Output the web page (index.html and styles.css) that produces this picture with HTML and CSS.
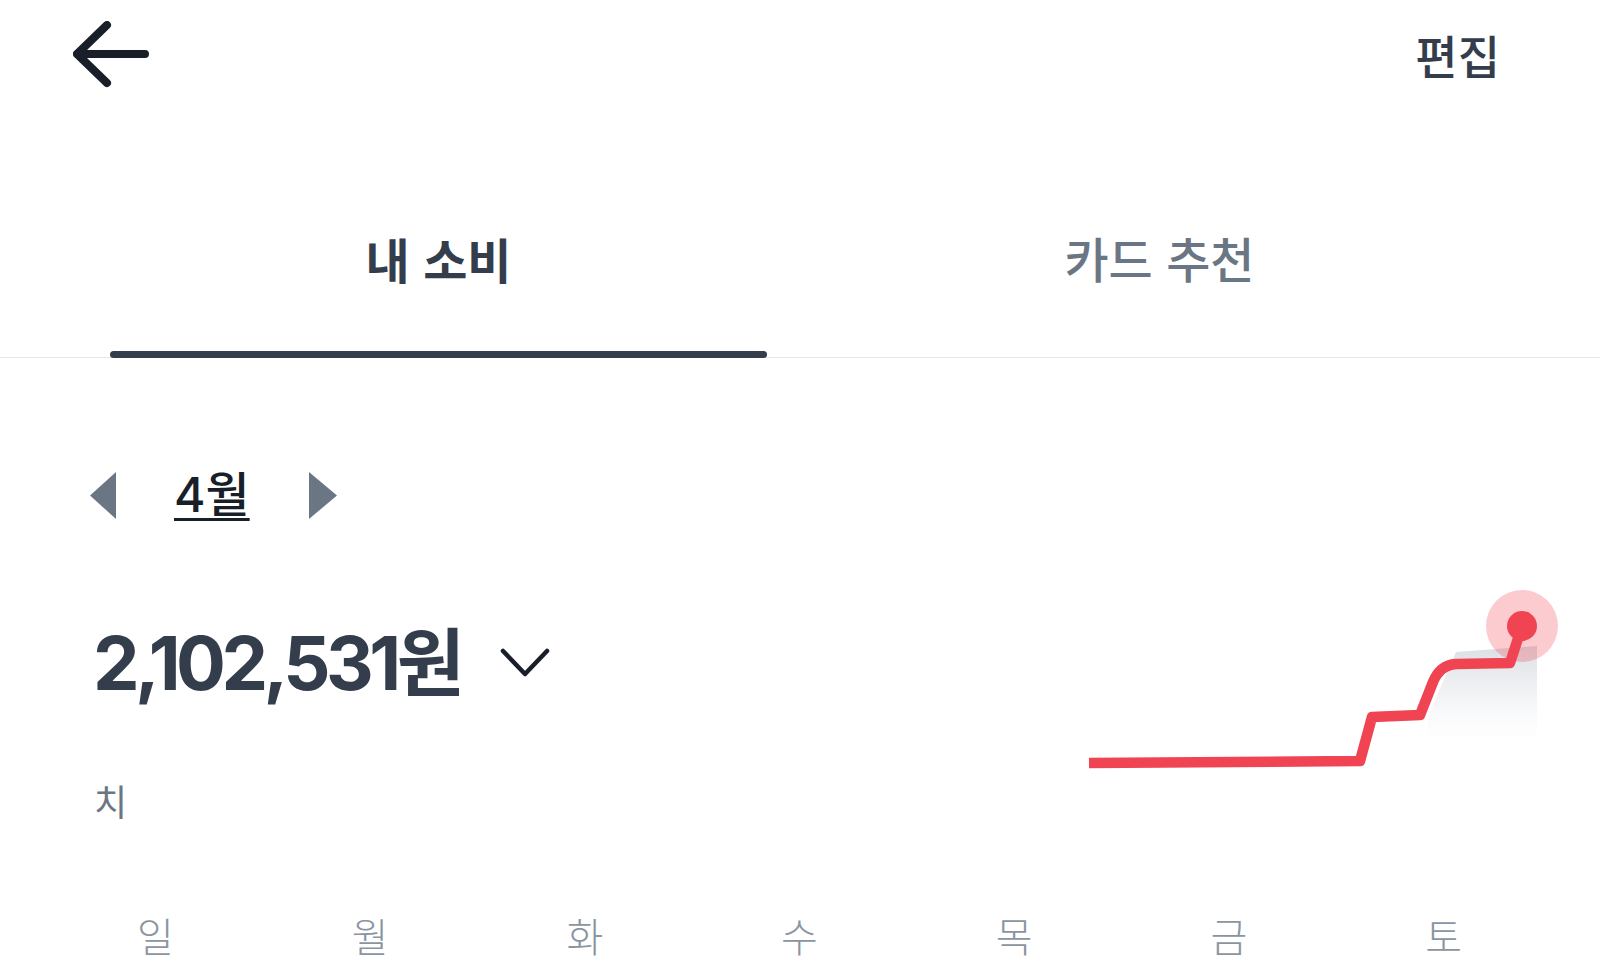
FILE: index.html
```html
<!DOCTYPE html>
<html lang="ko">
<head>
<meta charset="utf-8">
<title>내 소비</title>
<link rel="stylesheet" href="styles.css">
</head>
<body>
<header class="header">
  <svg class="back" width="80" height="70" viewBox="0 0 80 70">
    <path d="M34 4 L4 33 L34 62 M4 33 L72 33" fill="none" stroke="#191f28" stroke-width="8" stroke-linecap="round" stroke-linejoin="round"/>
  </svg>
  <span class="edit">편집</span>
</header>
<nav class="tabs">
  <div class="tab active"><span class="tab-label">내 소비</span><span class="tab-bar"></span></div>
  <div class="tab"><span class="tab-label">카드 추천</span></div>
</nav>
<main class="main">
  <div class="month-row">
    <svg class="tri" width="26" height="47" viewBox="0 0 26 47"><path d="M26 0 L26 47 L0 23.5 Z" fill="#6b7684"/></svg>
    <span class="month">4월</span>
    <svg class="tri" width="28" height="47" viewBox="0 0 28 47"><path d="M0 0 L0 47 L28 23.5 Z" fill="#6b7684"/></svg>
  </div>
  <div class="amount-row">
    <span class="amount">2,102,531원</span>
    <svg class="chev" width="50" height="30" viewBox="0 0 50 30"><path d="M3 3 L25 26 L47 3" fill="none" stroke="#191f28" stroke-width="4.5" stroke-linecap="round" stroke-linejoin="round"/></svg>
  </div>
  <div class="note">치</div>
  <svg class="chart" width="540" height="210" viewBox="0 0 540 210">
    <defs>
      <linearGradient id="shade" x1="0" y1="0" x2="0" y2="1">
        <stop offset="0" stop-color="#d9dde2" stop-opacity="0.95"/>
        <stop offset="0.5" stop-color="#eef0f3" stop-opacity="0.7"/>
        <stop offset="1" stop-color="#ffffff" stop-opacity="0"/>
      </linearGradient>
    </defs>
    <path d="M368 146 L396 82 L477 76 L477 182 L368 182 Z" fill="url(#shade)"/>
    <circle cx="462" cy="56" r="36" fill="#f04452" fill-opacity="0.28"/>
    <path d="M29 193 L300 191 L312 147 L360 145 L373 112 Q380 95 396 94 L450 93 L462 56" fill="none" stroke="#f04452" stroke-width="10.5" stroke-linejoin="round"/>
    <circle cx="462" cy="56" r="15" fill="#f04452"/>
  </svg>
  <div class="weekdays">
    <span>일</span><span>월</span><span>화</span><span>수</span><span>목</span><span>금</span><span>토</span>
  </div>
</main>
</body>
</html>
```

FILE: styles.css
```css
* { box-sizing: border-box; }
html, body { margin: 0; padding: 0; background: #ffffff; }
body {
  width: 1600px;
  height: 969px;
  overflow: hidden;
  font-family: "Noto Sans CJK KR", "Noto Sans", sans-serif;
  color: #333d4b;
}
.header {
  height: 108px;
  display: flex;
  align-items: center;
  justify-content: space-between;
  padding: 0 100px 0 73px;
}
.back { display: block; margin-top: 3px; }
.edit {
  font-size: 46px;
  font-weight: 500;
  line-height: 60px;
  color: #333d4b;
}
.tabs {
  height: 250px;
  display: flex;
  align-items: flex-end;
  padding-left: 110px;
  gap: 64px;
  border-bottom: 1px solid #e5e8eb;
}
.tab {
  width: 657px;
  display: flex;
  flex-direction: column;
  align-items: center;
}
.tab-label {
  font-size: 48px;
  line-height: 60px;
  font-weight: 500;
  color: #6b7684;
  margin-bottom: 70px;
}
.tab.active .tab-label {
  color: #333d4b;
  font-weight: 700;
  margin-bottom: 63px;
}
.tab-bar {
  display: block;
  width: 100%;
  height: 7px;
  border-radius: 4px;
  background: #333d4b;
  margin-bottom: -1px;
}
.main {
  position: relative;
  padding: 107px 0 0 90px;
}
.month-row {
  height: 60px;
  display: flex;
  align-items: center;
}
.month {
  margin-left: 58px;
  margin-right: 59px;
  font-family: "Inter", "Noto Sans CJK KR", sans-serif;
  font-size: 48px;
  font-weight: 500;
  line-height: 60px;
  color: #191f28;
  text-decoration: underline;
  text-decoration-thickness: 3px;
  text-underline-offset: 6px;
}
.amount-row {
  margin-top: 93px;
  height: 90px;
  display: flex;
  align-items: center;
  padding-left: 3px;
}
.amount {
  font-family: "Inter", "Noto Sans CJK KR", sans-serif;
  font-size: 74px;
  font-weight: 700;
  line-height: 90px;
  letter-spacing: -4.5px;
  color: #333d4b;
}
.chev { display: block; margin-left: 40px; margin-top: 0; }
.note {
  margin-top: 72px;
  padding-left: 4px;
  font-size: 36px;
  line-height: 40px;
  font-weight: 400;
  color: #6b7684;
}
.chart {
  position: absolute;
  left: 1060px;
  top: 212px;
}
.weekdays {
  margin: 93px 49px 0 -42px;
  display: grid;
  grid-template-columns: repeat(7, 1fr);
  text-align: center;
  font-size: 40px;
  font-weight: 300;
  line-height: 44px;
  color: #8b95a1;
}
```
